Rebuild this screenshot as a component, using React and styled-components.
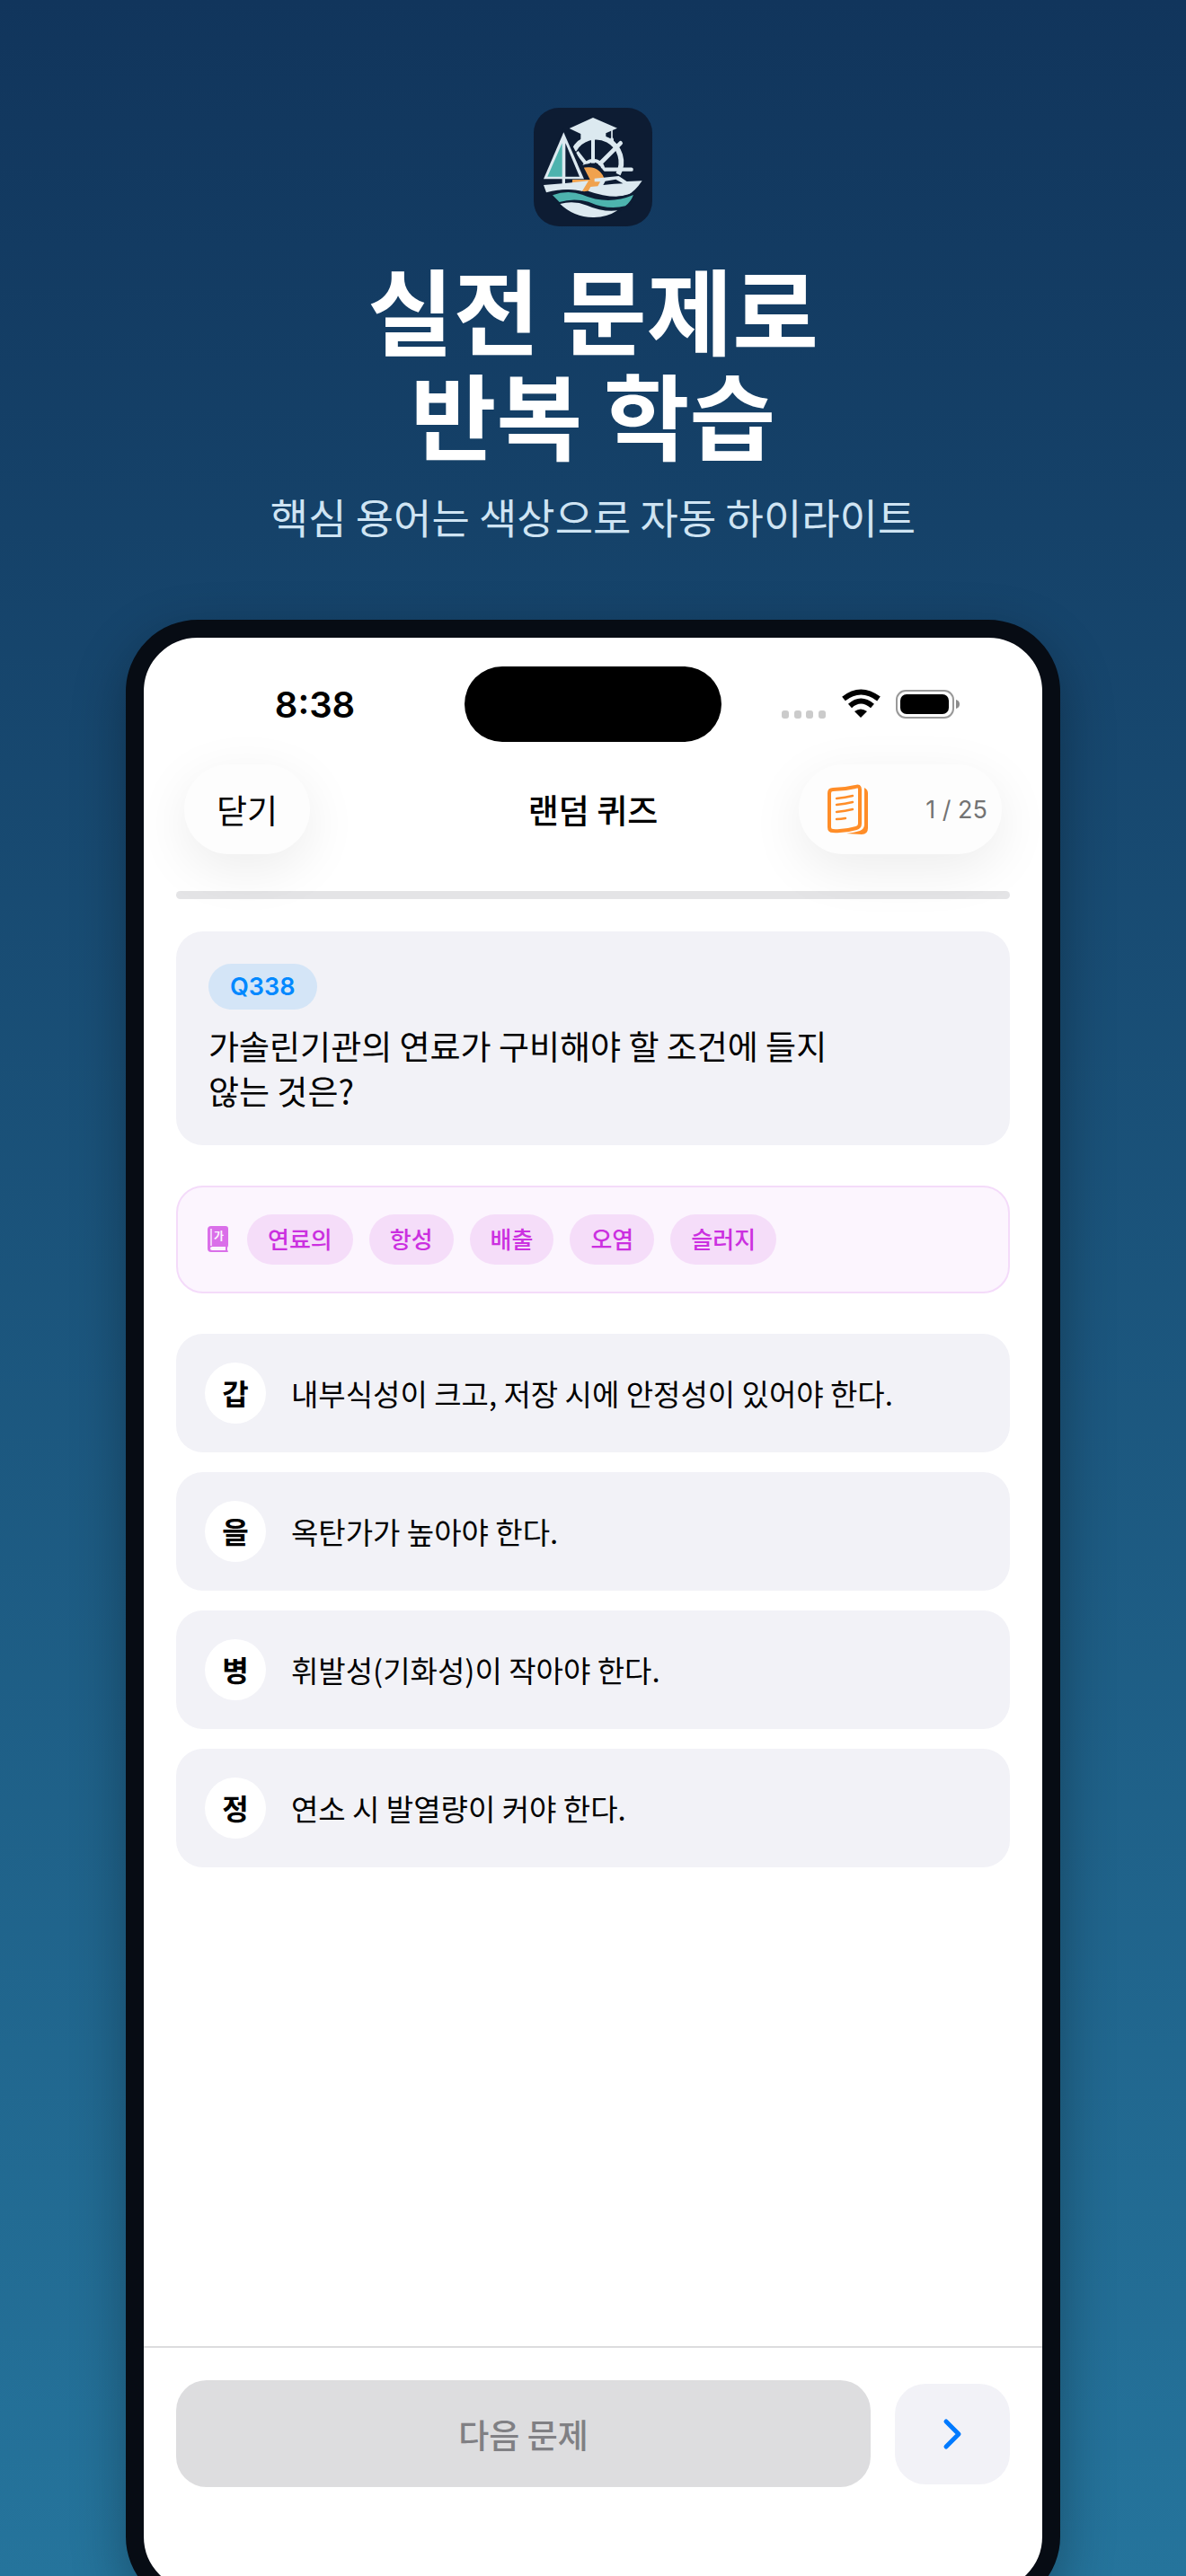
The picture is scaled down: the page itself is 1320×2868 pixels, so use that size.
import React, { useState } from "react";
import styled, { createGlobalStyle } from "styled-components";

const terms = ["연료의", "항성", "배출", "오염", "슬러지"];

const options = [
  { mark: "갑", text: "내부식성이 크고, 저장 시에 안정성이 있어야 한다." },
  { mark: "을", text: "옥탄가가 높아야 한다." },
  { mark: "병", text: "휘발성(기화성)이 작아야 한다." },
  { mark: "정", text: "연소 시 발열량이 커야 한다." },
];

const Logo = () => (
  <svg width="132" height="132" viewBox="102 60 396 396" aria-hidden="true">
    <rect x="102" y="60" width="396" height="396" rx="84" fill="#0d1c33" />
    {/* helm */}
    <g fill="none" stroke="#dce9f0" strokeWidth="17">
      <path d="M236 202 A84 84 0 0 1 384 282" />
      <path d="M268 262 A34 34 0 0 1 334 262" strokeWidth="12" />
      <path d="M300 160 V245" strokeWidth="12" />
      <path d="M324 246 L392 178" strokeWidth="14" strokeLinecap="round" />
      <path d="M336 266 H428" strokeWidth="13" strokeLinecap="round" />
      <path d="M276 246 L246 208" strokeWidth="12" />
    </g>
    {/* mortarboard */}
    <path
      d="M221 129 L300 93 L381 128 L343 145 V171 Q300 152 259 171 V147 Z"
      fill="#dce9f0"
    />
    <path d="M363 132 V164" stroke="#dce9f0" strokeWidth="5" />
    <rect x="357" y="160" width="12" height="19" rx="6" fill="#dce9f0" />
    {/* sun */}
    <circle cx="288" cy="309" r="62" fill="#0d1c33" />
    <path
      d="M234 330 A52 52 0 0 1 288 259 A52 52 0 0 1 338 300 L338 330 L270 340 Z"
      fill="#f0a24e"
    />
    {/* sail boat */}
    <path d="M202 128 L122 300 H290 Z" fill="#0d1c33" />
    <path d="M202 142 L135 298 H270 Z" fill="#dce9f0" />
    <path d="M197 178 V290 H148 Z" fill="#4db3ae" />
    <path d="M208 178 V290 H255 Z" fill="#0d1c33" />
    <path d="M202 290 V316" stroke="#dce9f0" strokeWidth="10" />
    <path
      d="M135 318 Q210 313 285 304 L264 338 Q210 326 144 343 Z"
      fill="#dce9f0"
    />
    {/* motor boat */}
    <path
      d="M305 296 L386 288 L413 306 L464 304 Q440 340 415 352 Q360 365 284 338 L292 324 L316 322 L324 307 H305 Z"
      fill="#dce9f0"
    />
    <path
      d="M334 318 L341 305 L376 299 L400 313 L370 314 Z"
      fill="#0d1c33"
    />
    {/* waves */}
    <path
      d="M152 346 Q210 324 262 342 Q350 378 446 340 L425 385 L380 412 Q330 408 280 388 Q235 368 184 380 Z"
      fill="#0d1c33"
    />
    <path
      d="M165 352 Q215 333 264 350 Q350 387 435 351 Q426 374 408 388 Q350 403 285 374 Q235 360 188 375 Z"
      fill="#4db3ae"
    />
    <path
      d="M190 381 Q235 368 280 386 Q332 409 382 403 Q345 427 300 426 Q235 425 190 381 Z"
      fill="#dce9f0"
    />
  </svg>
);

const StatusIcons = () => (
  <svg width="200" height="34" viewBox="0 0 200 34" aria-hidden="true">
    <g fill="#cbcbcb">
      <rect x="0" y="24" width="8" height="9" rx="3" />
      <rect x="14" y="24" width="8" height="9" rx="3" />
      <rect x="27" y="24" width="8" height="9" rx="3" />
      <rect x="41" y="24" width="8" height="9" rx="3" />
    </g>
    <g fill="none" stroke="#000" strokeWidth="6">
      <path d="M69 11 Q88 -4 108 11" />
      <path d="M76 19 Q88 8 101 19" />
    </g>
    <path d="M81 25 Q88 20 95 25 L88 32 Z" fill="#000" />
    <rect
      x="128"
      y="2"
      width="63"
      height="30"
      rx="10"
      fill="none"
      stroke="#999"
      strokeWidth="2"
    />
    <rect x="132" y="6" width="54" height="22" rx="7" fill="#000" />
    <path d="M194 12 Q198 13 198 17 Q198 21 194 22 Z" fill="#8c8c8c" />
  </svg>
);

const PagesIcon = () => (
  <svg width="45" height="56" viewBox="0 0 45 56" aria-hidden="true">
    <g
      fill="none"
      stroke="#ff8d28"
      strokeLinecap="round"
      strokeLinejoin="round"
    >
      <path
        d="M6 6 Q19 6 31 3 Q36 1 36 6 V44 Q36 48 32 49 Q19 53 6 52 Q2 52 2 48 V10 Q2 6 6 6 Z"
        strokeWidth="4"
      />
      <path
        d="M10 16 Q20 15 28 13 M10 23 Q20 22 28 20 M10 31 Q20 30 28 28 M10 39 Q15 39 20 38"
        strokeWidth="2.4"
      />
    </g>
    <path
      d="M41 4 Q45 6 45 10 V49 Q45 56 38 56 L21 55 Q30 54 36 52 Q41 50 41 45 Z"
      fill="#ff8d28"
    />
  </svg>
);

const DictionaryIcon = () => (
  <svg width="23" height="30" viewBox="0 0 23 30" aria-hidden="true">
    <path
      d="M4 0 H20 Q23 0 23 3 V21 Q23 23 22 24 V27 L23 28 Q23 29 22 29 H4 Q0 29 0 25 V4 Q0 0 4 0 Z"
      fill="#da6fe9"
    />
    <path d="M4 3 V22" stroke="#fcf5fe" strokeWidth="1.4" />
    <path d="M5 23 H20 V27 H5 Q3 27 3 25 Q3 23 5 23 Z" fill="#fcf5fe" />
    <text x="7" y="16" fontSize="12" fontWeight="700" fill="#fcf5fe">
      가
    </text>
  </svg>
);

const App = () => {
  const [selected, setSelected] = useState(null);

  return (
    <Page>
      <GlobalStyle />
      <Intro>
        <Logo />
        <Title>
          실전 문제로
          <br />
          반복 학습
        </Title>
        <Subtitle>핵심 용어는 색상으로 자동 하이라이트</Subtitle>
      </Intro>

      <Phone>
        <StatusBar>
          <Time>8:38</Time>
          <Island />
          <StatusSide>
            <StatusIcons />
          </StatusSide>
        </StatusBar>

        <NavBar>
          <CloseButton type="button">닫기</CloseButton>
          <NavTitle>랜덤 퀴즈</NavTitle>
          <NavTools>
            <IconButton type="button" aria-label="문제 목록">
              <PagesIcon />
            </IconButton>
            <Counter>1 / 25</Counter>
          </NavTools>
        </NavBar>

        <Content>
          <ProgressTrack
            role="progressbar"
            aria-label="진행률"
            aria-valuenow={0}
            aria-valuemax={25}
          />

          <QuestionCard>
            <Badge>Q338</Badge>
            <Question>가솔린기관의 연료가 구비해야 할 조건에 들지 않는 것은?</Question>
          </QuestionCard>

          <TermBox>
            <DictionaryIcon />
            <TermList>
              {terms.map((term) => (
                <Term key={term} type="button">
                  {term}
                </Term>
              ))}
            </TermList>
          </TermBox>

          <OptionList>
            {options.map(({ mark, text }) => (
              <Option
                key={mark}
                type="button"
                aria-pressed={selected === mark}
                onClick={() => setSelected(mark)}
              >
                <Mark>{mark}</Mark>
                {text}
              </Option>
            ))}
          </OptionList>
        </Content>

        <Footer>
          <NextButton type="button" disabled={!selected}>
            다음 문제
          </NextButton>
          <SkipButton type="button" aria-label="건너뛰기">
            <svg width="22" height="36" viewBox="0 0 22 36" aria-hidden="true">
              <path
                d="M4 4 L18 18 L4 32"
                fill="none"
                stroke="#007aff"
                strokeWidth="5"
                strokeLinecap="round"
                strokeLinejoin="round"
              />
            </svg>
          </SkipButton>
        </Footer>
      </Phone>
    </Page>
  );
};

export default App;

const GlobalStyle = createGlobalStyle`
  * {
    box-sizing: border-box;
  }

  body {
    margin: 0;
    font-family: "Noto Sans CJK KR", sans-serif;
    color: #000;
  }

  button {
    border: none;
    padding: 0;
    font: inherit;
    color: inherit;
    cursor: pointer;
  }

  svg {
    display: block;
    flex-shrink: 0;
  }
`;

const Page = styled.main`
  display: flex;
  flex-direction: column;
  height: 100vh;
  padding: 120px 140px 0;
  overflow: hidden;
  background: linear-gradient(#11355c, #25749c);
`;

const Intro = styled.header`
  display: flex;
  flex-direction: column;
  align-items: center;
  padding-bottom: 82px;
  text-align: center;
`;

const Title = styled.h1`
  margin: 32px 0 0;
  font-size: 104px;
  font-weight: 700;
  line-height: 117px;
  color: #fff;
`;

const Subtitle = styled.p`
  margin: 22px 0 0;
  font-size: 46px;
  line-height: 68px;
  color: #cfe4f3;
`;

const Phone = styled.section`
  display: flex;
  flex-direction: column;
  flex: 1 0 auto;
  margin-bottom: -36px;
  border: 20px solid #070c14;
  border-radius: 80px;
  background: #fff;
  box-shadow: 0 20px 60px rgba(0, 0, 0, 0.3);
`;

const StatusBar = styled.div`
  display: grid;
  grid-template-columns: 1fr auto 1fr;
  align-items: center;
  padding-top: 32px;
`;

const Time = styled.span`
  padding-left: 24px;
  font-family: Inter, sans-serif;
  font-size: 40px;
  font-weight: 600;
  text-align: center;
`;

const Island = styled.div`
  width: 286px;
  height: 84px;
  border-radius: 42px;
  background: #000;
`;

const StatusSide = styled.div`
  display: flex;
  justify-content: flex-end;
  padding-right: 90px;
`;

const NavBar = styled.nav`
  display: grid;
  grid-template-columns: 1fr auto 1fr;
  align-items: center;
  margin-top: 25px;
  padding: 0 45px;
`;

const CloseButton = styled.button`
  width: 140px;
  height: 100px;
  border-radius: 50px;
  background: #fdfdfd;
  box-shadow: 0 16px 60px rgba(0, 0, 0, 0.08);
  font-size: 37px;
  line-height: 48px;
`;

const NavTitle = styled.h2`
  margin: 0;
  font-size: 37px;
  font-weight: 500;
  line-height: 48px;
`;

const NavTools = styled.div`
  display: flex;
  align-items: center;
  justify-content: space-between;
  justify-self: end;
  width: 226px;
  height: 100px;
  padding: 0 16px 0 32px;
  border-radius: 50px;
  background: #fdfdfd;
  box-shadow: 0 16px 60px rgba(0, 0, 0, 0.08);
`;

const IconButton = styled.button`
  background: none;
`;

const Counter = styled.span`
  font-family: Inter, sans-serif;
  font-size: 27px;
  color: #737373;
`;

const Content = styled.div`
  flex: 1;
  padding: 41px 36px;
`;

const ProgressTrack = styled.div`
  height: 9px;
  border-radius: 5px;
  background: rgba(120, 120, 128, 0.2);
`;

const QuestionCard = styled.article`
  display: flex;
  flex-direction: column;
  align-items: flex-start;
  gap: 15px;
  margin-top: 36px;
  padding: 36px;
  border-radius: 30px;
  background: #f2f2f7;
`;

const Badge = styled.span`
  display: flex;
  align-items: center;
  height: 51px;
  padding: 0 24px;
  border-radius: 26px;
  background: #d4e5f7;
  font-family: Inter, sans-serif;
  font-size: 27px;
  font-weight: 600;
  color: #0088ff;
`;

const Question = styled.p`
  max-width: 740px;
  margin: 0;
  font-size: 37px;
  line-height: 50px;
  word-break: keep-all;
`;

const TermBox = styled.div`
  display: flex;
  align-items: center;
  gap: 21px;
  margin-top: 45px;
  padding: 30px 33px;
  border: 2px solid #f4dbfa;
  border-radius: 30px;
  background: #fcf5fe;
`;

const TermList = styled.div`
  display: flex;
  gap: 18px;
`;

const Term = styled.button`
  height: 56px;
  padding: 0 23px 2px;
  border-radius: 28px;
  background: #f5ddf9;
  font-size: 26px;
  font-weight: 500;
  line-height: 36px;
  color: #cb30e0;
`;

const OptionList = styled.div`
  display: flex;
  flex-direction: column;
  gap: 22px;
  margin-top: 45px;
`;

const Option = styled.button`
  display: flex;
  align-items: center;
  gap: 28px;
  padding: 32px;
  border-radius: 30px;
  background: #f2f2f7;
  font-size: 33px;
  line-height: 44px;
  text-align: left;
`;

const Mark = styled.span`
  display: flex;
  align-items: center;
  justify-content: center;
  width: 68px;
  height: 68px;
  padding-bottom: 2px;
  border-radius: 50%;
  background: #fff;
  font-size: 32px;
  font-weight: 700;
`;

const Footer = styled.footer`
  display: flex;
  align-items: center;
  gap: 27px;
  padding: 36px 36px 115px;
  border-top: 2px solid #dcdcde;
`;

const NextButton = styled.button`
  flex: 1;
  height: 119px;
  border-radius: 34px;
  background: #dddddf;
  font-size: 37px;
  font-weight: 500;
  line-height: 48px;
  color: #808084;
`;

const SkipButton = styled.button`
  display: flex;
  align-items: center;
  justify-content: center;
  width: 128px;
  height: 112px;
  border-radius: 34px;
  background: #f2f2f7;
`;
